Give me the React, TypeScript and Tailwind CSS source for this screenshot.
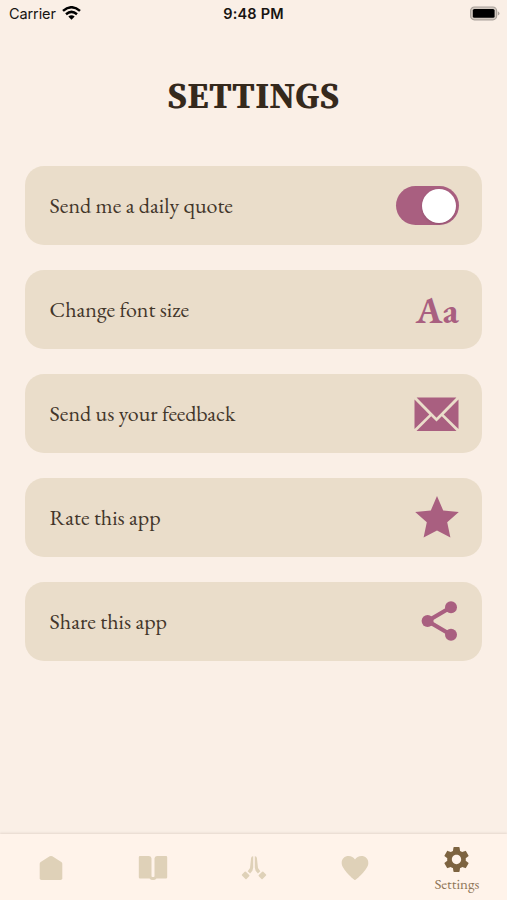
import { useState, type ReactNode } from 'react';
import { MdSettings } from 'react-icons/md';

const serif = "font-['EB_Garamond','Liberation_Serif',serif]";

const MailIcon = () => (
  <svg width="45" height="35" viewBox="0 0 45 35" fill="currentColor" className="mt-0.5">
    <path d="M2.6 0.5H42.4L22.5 20.7Z" />
    <path d="M0.5 2.5L15.3 17.4L0.5 32Z" />
    <path d="M44.5 2.5L29.7 17.4L44.5 32Z" />
    <path d="M2.5 34L17.2 19.3L22.5 24.5L27.8 19.3L42.5 34Z" />
  </svg>
);

const StarIcon = () => (
  <svg width="44" height="42" viewBox="0 0 44 42" fill="currentColor">
    <path d="M22 0L28.2 14.5L43.8 15.9L32.2 26.3L35.4 41.5L22 34.5L8.6 41.5L11.8 26.3L0.2 15.9L15.8 14.5Z" />
  </svg>
);

const ShareIcon = () => (
  <svg width="38" height="42" viewBox="0 0 38 42" fill="currentColor" className="-mt-px">
    <path d="M30 7.3L6.6 21L30 34.7" fill="none" stroke="currentColor" strokeWidth="4.2" />
    <circle cx="30" cy="7.3" r="6" />
    <circle cx="6.6" cy="21" r="6" />
    <circle cx="30" cy="34.7" r="6" />
  </svg>
);

const HomeIcon = () => (
  <svg width="24" height="26" viewBox="0 0 24 26" fill="currentColor">
    <path d="M10.7 1.3Q12 0.5 13.3 1.3L22.3 7Q23.3 7.7 23.3 9V23.2Q23.3 25 21.5 25H2.5Q0.7 25 0.7 23.2V9Q0.7 7.7 1.7 7Z" />
  </svg>
);

const BookIcon = () => (
  <svg width="30" height="26" viewBox="0 0 30 26" fill="currentColor">
    <path d="M2 1H11Q13.5 1.2 13.5 3.5V21.5Q15 22.6 16.5 21.5V3.5Q16.5 1.2 19 1H28Q29.2 1 29.2 2.2V22.3Q29.2 23.5 28 23.5H18.5Q17.3 25 15 25T11.5 23.5H2Q0.8 23.5 0.8 22.3V2.2Q0.8 1 2 1Z" />
  </svg>
);

const PrayIcon = () => (
  <svg width="26" height="26" viewBox="0 0 26 26" fill="currentColor">
    <path d="M12.2 1.2V12.6L11.4 15.8L9.1 18.6L6.7 16.3L9 13L10.1 3Q10.4 1 12.2 1.2Z" />
    <path d="M13.8 1.2V12.6L14.6 15.8L16.9 18.6L19.3 16.3L17 13L15.9 3Q15.6 1 13.8 1.2Z" />
    <rect x="1.4" y="17.6" width="6.4" height="5.4" rx="0.8" transform="rotate(45 4.6 20.3)" />
    <rect x="18.2" y="17.6" width="6.4" height="5.4" rx="0.8" transform="rotate(-45 21.4 20.3)" />
  </svg>
);

const HeartIcon = () => (
  <svg width="28" height="26" viewBox="0 0 28 26" fill="currentColor">
    <path d="M14 25C13 25 1 14.5 0.7 8.5C0.3 3.5 4 1 7.5 1C10.5 1 12.5 2.5 14 4.4C15.5 2.5 17.5 1 20.5 1C24 1 27.7 3.5 27.3 8.5C27 14.5 15 25 14 25Z" />
  </svg>
);

function StatusBar() {
  return (
    <div className="grid h-7 grid-cols-3 items-center pl-[9px] pr-[7px] font-['Inter','Liberation_Sans',sans-serif] text-[14.5px] leading-7 text-[#171411]">
      <div className="flex items-center gap-[6px]">
        <span className="tracking-[-0.1px]">Carrier</span>
        <svg width="19" height="14" viewBox="0 0 19 14" fill="none" stroke="black" strokeWidth="2.5" className="-mt-0.5">
          <path d="M1 4.9Q9.5 -2.4 18 4.9" />
          <path d="M4 8.2Q9.5 3.6 15 8.2" />
          <path d="M9.5 13.8L6.3 10.5Q9.5 7.9 12.7 10.5Z" fill="black" stroke="none" />
        </svg>
      </div>
      <span className="-ml-0.5 text-center font-semibold tracking-[0.2px]">9:48 PM</span>
      <svg width="31" height="15" viewBox="0 0 31 15" className="-mt-0.5 justify-self-end">
        <rect x="1.6" y="1" width="26" height="12.8" rx="3.8" fill="#d3c9c0" stroke="#aaa29b" strokeWidth="1.2" />
        <rect x="3.8" y="3" width="21.8" height="8.8" rx="1.6" fill="black" />
        <path d="M28.8 5.2Q30.5 6 30.5 7.4T28.8 9.6Z" fill="#aaa29b" />
      </svg>
    </div>
  );
}

function SettingRow({ label, children }: { label: string; children: ReactNode }) {
  return (
    <div className="flex h-[79px] items-center justify-between rounded-[19px] bg-[#eaddca] pl-[24.5px] pr-[23.3px] text-[#a95f80]">
      <span className="text-[22px] text-[#43362a]">{label}</span>
      {children}
    </div>
  );
}

const tabs = [
  { id: 'home', icon: <HomeIcon /> },
  { id: 'book', icon: <BookIcon /> },
  { id: 'pray', icon: <PrayIcon /> },
  { id: 'favorites', icon: <HeartIcon /> },
];

export default function App() {
  const [daily, setDaily] = useState(true);

  return (
    <div className={`flex h-[900px] w-[507px] flex-col overflow-hidden bg-[#faefe6] ${serif}`}>
      <StatusBar />

      <h1 className="mt-[44px] text-center font-['Source_Serif_Pro','Source_Serif_4','Noto_Serif','Liberation_Serif',serif] text-[36px] font-bold leading-[48px] tracking-[0.25px] text-[#35291c]">
        SETTINGS
      </h1>

      <main className="mt-[46px] flex flex-1 flex-col gap-[24.88px] px-[25.1px]">
        <SettingRow label="Send me a daily quote">
          <button
            role="switch"
            aria-checked={daily}
            aria-label="Send me a daily quote"
            onClick={() => setDaily(!daily)}
            className={`flex h-[39px] w-[63px] items-center rounded-full px-[2.5px] ${daily ? 'justify-end bg-[#a95f80]' : 'justify-start bg-[#cdbfa8]'}`}
          >
            <span className="size-[34px] rounded-full bg-white shadow-sm" />
          </button>
        </SettingRow>
        <SettingRow label="Change font size">
          <span className="mt-0.5 text-[37px] font-bold leading-none">Aa</span>
        </SettingRow>
        <SettingRow label="Send us your feedback">
          <MailIcon />
        </SettingRow>
        <SettingRow label="Rate this app">
          <StarIcon />
        </SettingRow>
        <SettingRow label="Share this app">
          <ShareIcon />
        </SettingRow>
      </main>

      <nav className="grid h-[66px] grid-cols-5 bg-[#fff3ea] text-[#dfd1b8] shadow-[0_-1px_2px_rgba(90,60,40,0.13)]">
        {tabs.map((tab) => (
          <button key={tab.id} aria-label={tab.id} className="flex items-center justify-center pl-px pt-[2px]">
            {tab.icon}
          </button>
        ))}
        <button className="flex flex-col items-center pl-px pt-[10px] text-[#7d6340]">
          <MdSettings size={31} />
          <span className="text-[15px] leading-[18px] tracking-[-0.05px] text-[#8f7658]">Settings</span>
        </button>
      </nav>
    </div>
  );
}
